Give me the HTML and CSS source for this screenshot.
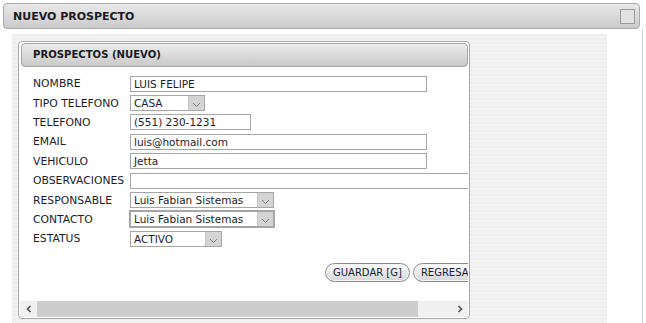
FILE: index.html
```html
<!DOCTYPE html>
<html lang="es">
<head>
  <meta charset="UTF-8">
  <title>Nuevo prospecto</title>
  <link rel="stylesheet" href="styles.css">
</head>
<body>
  <div class="window">
    <div class="win-head">
      <span class="win-title">NUEVO PROSPECTO</span>
      <span class="win-box"></span>
    </div>
    <div class="win-body">
      <div class="stage">
        <div class="panel">
          <div class="panel-head">PROSPECTOS (NUEVO)</div>
          <div class="panel-view">
            <div class="form">
              <label>NOMBRE</label>
              <div class="row"><span class="input w-long">LUIS FELIPE</span></div>

              <label>TIPO TELEFONO</label>
              <div class="row"><span class="select w-tipo"><span class="sel-text">CASA</span><span class="sel-arrow"><svg width="9" height="6" viewBox="0 0 9 6"><path d="M1 1 L4.5 4.5 L8 1" fill="none" stroke="#7a7a7a" stroke-width="1"/></svg></span></span></div>

              <label>TELEFONO</label>
              <div class="row"><span class="input w-tel">(551) 230-1231</span></div>

              <label>EMAIL</label>
              <div class="row"><span class="input w-long">luis@hotmail.com</span></div>

              <label>VEHICULO</label>
              <div class="row"><span class="input w-long">Jetta</span></div>

              <label>OBSERVACIONES</label>
              <div class="row"><span class="input w-obs"></span></div>

              <label>RESPONSABLE</label>
              <div class="row"><span class="select w-resp"><span class="sel-text">Luis Fabian Sistemas</span><span class="sel-arrow"><svg width="9" height="6" viewBox="0 0 9 6"><path d="M1 1 L4.5 4.5 L8 1" fill="none" stroke="#7a7a7a" stroke-width="1"/></svg></span></span></div>

              <label>CONTACTO</label>
              <div class="row"><span class="select w-resp focus"><span class="sel-text">Luis Fabian Sistemas</span><span class="sel-arrow"><svg width="9" height="6" viewBox="0 0 9 6"><path d="M1 1 L4.5 4.5 L8 1" fill="none" stroke="#7a7a7a" stroke-width="1"/></svg></span></span></div>

              <label>ESTATUS</label>
              <div class="row"><span class="select w-est"><span class="sel-text">ACTIVO</span><span class="sel-arrow"><svg width="9" height="6" viewBox="0 0 9 6"><path d="M1 1 L4.5 4.5 L8 1" fill="none" stroke="#7a7a7a" stroke-width="1"/></svg></span></span></div>
            </div>

            <div class="actions">
              <button class="btn">GUARDAR [G]</button>
              <button class="btn">REGRESAR [R]</button>
            </div>
          </div>

          <div class="hscroll">
            <span class="sb-btn"><svg width="8" height="8" viewBox="0 0 8 8"><path d="M5.5 1 L2.5 4 L5.5 7" fill="none" stroke="#505050" stroke-width="1.6"/></svg></span>
            <span class="sb-thumb"></span>
            <span class="sb-track"></span>
            <span class="sb-btn"><svg width="8" height="8" viewBox="0 0 8 8"><path d="M2.5 1 L5.5 4 L2.5 7" fill="none" stroke="#505050" stroke-width="1.6"/></svg></span>
          </div>
        </div>
      </div>
    </div>
  </div>
</body>
</html>
```

FILE: styles.css
```css
html, body {
  margin: 0;
  height: 100%;
  overflow: hidden;
  background: #ffffff;
  font-family: 'DejaVu Sans', Verdana, sans-serif;
  font-size: 10.5px;
  color: #1c1c2c;
}

.window {
  margin: 3px 0 0 3px;
  width: 640px;
  height: 320px;
  display: flex;
  flex-direction: column;
}

/* window title bar */
.win-head {
  height: 26px;
  margin-right: 3px;
  box-sizing: border-box;
  border: 1px solid #a9a9a9;
  border-radius: 4px;
  background: linear-gradient(#e8e8e8, #cbcbcb);
  display: flex;
  align-items: center;
  justify-content: space-between;
  padding: 0 4px 0 9px;
}

.win-title {
  font-weight: bold;
  font-size: 11px;
  color: #1a1a24;
}

.win-box {
  width: 15px;
  height: 15px;
  box-sizing: border-box;
  border: 1px solid #9a9a9a;
  background: #e2e2e2;
}

.win-body {
  flex: 1;
  border-right: 1px solid #d2d2d2;
  padding: 5px 0 0 9px;
}

.stage {
  width: 595px;
  height: 100%;
  box-sizing: border-box;
  padding: 7px 0 0 6px;
  background: repeating-linear-gradient(to bottom, #eeeeee 0 2px, #f3f3f3 2px 4px);
}

/* inner panel */
.panel {
  width: 452px;
  height: 278px;
  box-sizing: border-box;
  border: 1px solid #a8a8a8;
  border-radius: 4px;
  background: #fff;
  padding: 1px 1px 1px 2px;
  display: flex;
  flex-direction: column;
}

.panel-head {
  height: 24px;
  box-sizing: border-box;
  border: 1px solid #a2a2a2;
  border-radius: 4px;
  background: linear-gradient(#ececec, #c9c9c9);
  font-weight: bold;
  font-size: 10.1px;
  line-height: 22px;
  padding-left: 11px;
  color: #1a1a24;
}

.panel-view {
  flex: 1;
  overflow: hidden;
  padding: 7px 0 0 12px;
}

.form {
  display: grid;
  grid-template-columns: 97px 1fr;
  grid-auto-rows: 19.4px;
  align-items: center;
}

.form label {
  white-space: nowrap;
  font-size: 10.8px;
}

.row {
  display: flex;
  align-items: center;
  white-space: nowrap;
}

.input {
  display: block;
  height: 16px;
  box-sizing: border-box;
  border: 1px solid #a6a6a6;
  padding: 0 3px;
  line-height: 14px;
  color: #1c1c2c;
  flex: none;
}

.w-long { width: 297px; }
.w-tel { width: 121px; }
.w-obs { width: 420px; }

.select {
  display: flex;
  height: 16px;
  box-sizing: border-box;
  border: 1px solid #a6a6a6;
  flex: none;
}

.select.focus {
  height: 18px;
  border: 2px solid #a6a6a6;
  margin-left: -1px;
}

.w-tipo { width: 75px; }
.w-resp { width: 144px; }
.w-resp.focus { width: 146px; }
.w-est { width: 92px; }

.sel-text {
  flex: 1;
  padding-left: 3px;
  line-height: 14px;
  overflow: hidden;
}

.sel-arrow {
  width: 16px;
  background: #d4d4d4;
  border-left: 1px solid #c4c4c4;
  display: flex;
  align-items: flex-end;
  justify-content: center;
  padding-bottom: 2px;
  box-sizing: border-box;
}

.actions {
  display: flex;
  gap: 3px;
  margin: 14px 0 0 292px;
  white-space: nowrap;
}

.btn {
  flex: none;
  height: 19px;
  padding: 0 7px;
  border: 1px solid #8a8a8a;
  border-radius: 10px;
  background: linear-gradient(#ffffff, #e4e4e4 60%, #d6d6d6);
  box-shadow: inset 0 0 0 1px #f6f6f6;
  font-family: 'DejaVu Sans', Verdana, sans-serif;
  font-size: 10px;
  color: #1a1a3a;
}

/* horizontal scrollbar */
.hscroll {
  height: 16px;
  margin-left: -1px;
  display: flex;
  background: #f0f0f0;
}

.sb-btn {
  width: 17px;
  display: flex;
  align-items: center;
  justify-content: center;
}

.sb-thumb {
  width: 381px;
  background: #cdcdcd;
}

.sb-track {
  flex: 1;
}
```
